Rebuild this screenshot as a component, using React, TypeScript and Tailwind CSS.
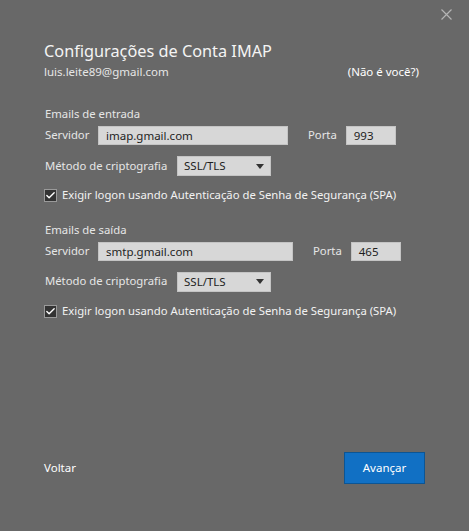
import { Check } from "lucide-react";

const Field = ({ value, className }: { value: string; className: string }) => (
  <div className={`h-[19px] bg-[#d7d7d7] border border-[#c4c4c4] flex items-center pl-[7px] text-[11.5px] text-[#1e1e1e] ${className}`}>
    {value}
  </div>
);

const Select = ({ value }: { value: string }) => (
  <div className="h-[20px] w-[94px] bg-[#d7d7d7] border border-[#c4c4c4] flex items-center justify-between pl-[6px] pr-[6px] text-[11.5px] text-[#1e1e1e]">
    <span>{value}</span>
    <svg width="8" height="5" viewBox="0 0 8 5">
      <path d="M0 0h8L4 5z" fill="#333" />
    </svg>
  </div>
);

const CheckRow = ({ label }: { label: string }) => (
  <div className="flex items-center gap-[5px] text-[11.3px] text-[#f2f2f2]">
    <div className="w-[13px] h-[13px] bg-[#333] border border-[#9a9a9a] flex items-center justify-center">
      <Check className="w-[11px] h-[11px] text-white" strokeWidth={3} />
    </div>
    <span>{label}</span>
  </div>
);

const Section = ({
  title,
  server,
  port,
  serverW,
  portGap,
}: {
  title: string;
  server: string;
  port: string;
  serverW: string;
  portGap: string;
}) => (
  <div className="flex flex-col">
    <div className="text-[11.3px] text-[#e6e6e6] leading-[16px]">{title}</div>
    <div className="flex items-center mt-[4px] text-[11.3px] text-[#e6e6e6]">
      <span className="w-[53px]">Servidor</span>
      <Field value={server} className={serverW} />
      <span className={portGap}>Porta</span>
      <Field value={port} className="w-[50px] ml-[9px]" />
    </div>
    <div className="flex items-center mt-[11px] text-[11.3px] text-[#e6e6e6]">
      <span className="w-[132px]">Método de criptografia</span>
      <Select value="SSL/TLS" />
    </div>
    <div className="mt-[11px] -ml-px">
      <CheckRow label="Exigir logon usando Autenticação de Senha de Segurança (SPA)" />
    </div>
  </div>
);

export default function App() {
  return (
    <div
      className="w-[469px] h-[531px] bg-[#686868] flex flex-col"
      style={{ fontFamily: '"Noto Sans", "Open Sans", sans-serif' }}
    >
      <div className="flex justify-end pt-[9px] pr-[17px]">
        <svg width="11" height="11" viewBox="0 0 11 11">
          <path d="M0.5 0.5l10 10M10.5 0.5l-10 10" stroke="#b4b4b4" strokeWidth="1.2" />
        </svg>
      </div>
      <div className="flex flex-col px-[44px] pt-[20px]">
        <h1 className="text-[16.3px] text-[#f4f4f4] leading-[22px]">Configurações de Conta IMAP</h1>
        <div className="flex justify-between mt-[2px] pr-[6px] text-[11.5px] text-[#e6e6e6] leading-[16px]">
          <span>luis.leite89@gmail.com</span>
          <span className="text-white">(Não é você?)</span>
        </div>
        <div className="mt-[26px] ml-px">
          <Section
            title="Emails de entrada"
            server="imap.gmail.com"
            port="993"
            serverW="w-[190px]"
            portGap="ml-[20px]"
          />
        </div>
        <div className="mt-[18px] ml-px">
          <Section
            title="Emails de saída"
            server="smtp.gmail.com"
            port="465"
            serverW="w-[195px]"
            portGap="ml-[20px]"
          />
        </div>
      </div>
      <div className="flex-1" />
      <div className="flex items-center justify-between px-[44px] mb-[47px]">
        <span className="text-[11.5px] text-white">Voltar</span>
        <button className="w-[81px] h-[32px] bg-[#1170c4] border border-[#0c5594] text-[11.5px] text-white">
          Avançar
        </button>
      </div>
    </div>
  );
}
